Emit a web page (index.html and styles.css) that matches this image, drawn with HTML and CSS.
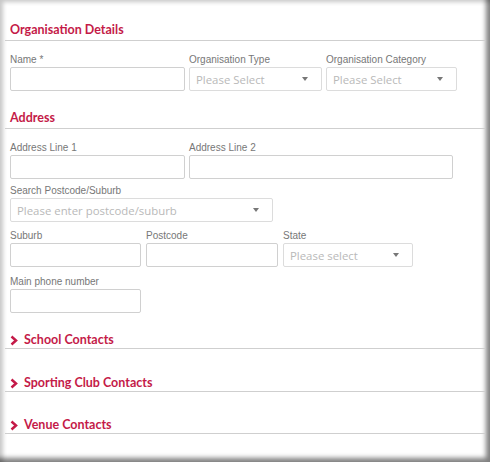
FILE: index.html
```html
<!DOCTYPE html>
<html>
<head>
<meta charset="utf-8">
<link rel="stylesheet" href="styles.css">
</head>
<body>
<div class="frame">
  <div class="panel">
    <h2 class="section-title first">Organisation Details</h2>
    <div class="row row-first">
      <div class="field w175">
        <label>Name *</label>
        <div class="input"></div>
      </div>
      <div class="field w133">
        <label>Organisation Type</label>
        <div class="select"><span>Please Select</span><i class="caret"></i></div>
      </div>
      <div class="field w131">
        <label>Organisation Category</label>
        <div class="select"><span>Please Select</span><i class="caret"></i></div>
      </div>
    </div>

    <h2 class="section-title address">Address</h2>
    <div class="row row-first">
      <div class="field w175">
        <label>Address Line 1</label>
        <div class="input"></div>
      </div>
      <div class="field w264">
        <label>Address Line 2</label>
        <div class="input"></div>
      </div>
    </div>
    <div class="row tight">
      <div class="field w263">
        <label>Search Postcode/Suburb</label>
        <div class="select"><span>Please enter postcode/suburb</span><i class="caret"></i></div>
      </div>
    </div>
    <div class="row gap5">
      <div class="field w131">
        <label>Suburb</label>
        <div class="input"></div>
      </div>
      <div class="field w132">
        <label>Postcode</label>
        <div class="input"></div>
      </div>
      <div class="field w130">
        <label>State</label>
        <div class="select"><span>Please select</span><i class="caret"></i></div>
      </div>
    </div>
    <div class="row loose">
      <div class="field w131">
        <label>Main phone number</label>
        <div class="input"></div>
      </div>
    </div>

    <h2 class="collapse c1"><svg class="chev" width="8" height="11" viewBox="0 0 8 11"><polyline points="1.5,1.5 6,5.5 1.5,9.5" fill="none" stroke="currentColor" stroke-width="2.5"/></svg>School Contacts</h2>
    <h2 class="collapse c2"><svg class="chev" width="8" height="11" viewBox="0 0 8 11"><polyline points="1.5,1.5 6,5.5 1.5,9.5" fill="none" stroke="currentColor" stroke-width="2.5"/></svg>Sporting Club Contacts</h2>
    <h2 class="collapse c3"><svg class="chev" width="8" height="11" viewBox="0 0 8 11"><polyline points="1.5,1.5 6,5.5 1.5,9.5" fill="none" stroke="currentColor" stroke-width="2.5"/></svg>Venue Contacts</h2>
  </div>
</div>
</body>
</html>
```

FILE: styles.css
```css
* { box-sizing: border-box; }
html, body { margin: 0; padding: 0; background: #fff; }
.frame {
  width: 490px;
  height: 462px;
  overflow: hidden;
  background: #fff;
  box-shadow:
    inset 4px 3px 4px -1px rgba(0,0,0,0.22),
    inset -6px -6px 5px -2px rgba(0,0,0,0.5);
  padding: 0 5px;
}
.panel { padding-top: 1px; }
.section-title, .collapse {
  margin: 0;
  font-family: "Lato", "Open Sans", sans-serif;
  font-weight: 700;
  font-size: 12.5px;
  line-height: 16px;
  color: #c41a48;
  padding: 0 0 2px 5px;
  border-bottom: 1px solid #cfcfcf;
}
.section-title.first { margin-top: 21px; }
.section-title.address { margin-top: 19px; }
.collapse {
  display: flex;
  align-items: center;
  padding-bottom: 0;
  padding-left: 5px;
}
.collapse .chev { margin-right: 6px; color: #c41a48; }
.collapse.c1 { margin-top: 19px; }
.collapse.c2 { margin-top: 26px; }
.collapse.c3 { margin-top: 25px; }
.row {
  display: flex;
  gap: 4px;
  padding-left: 5px;
  margin-top: 8px;
}
.row.row-first { margin-top: 13px; }
.row.tight { margin-top: 6px; }
.row.loose { margin-top: 9px; }
.row.gap5 { gap: 5px; }
.field { display: flex; flex-direction: column; }
.w130 { width: 130px; }
.w131 { width: 131px; }
.w132 { width: 132px; }
.w133 { width: 133px; }
.w175 { width: 175px; }
.w263 { width: 263px; }
.w264 { width: 264px; }
label {
  font-family: "Liberation Sans", Arial, sans-serif;
  font-size: 10px;
  line-height: 12px;
  color: #777;
  margin-bottom: 1px;
  white-space: nowrap;
}
.input, .select {
  height: 24px;
  border: 1px solid #d0d0d0;
  border-radius: 2px;
  background: #fff;
}
.select {
  display: flex;
  align-items: center;
  justify-content: space-between;
  padding: 0 13px 0 6px;
  border-color: #dcdcdc;
}
.select span {
  font-family: "Open Sans", sans-serif;
  font-size: 11.4px;
  color: #b9b9b9;
  white-space: nowrap;
}
.caret {
  width: 0;
  height: 0;
  border-left: 3.5px solid transparent;
  border-right: 3.5px solid transparent;
  border-top: 4px solid #777;
}
```
